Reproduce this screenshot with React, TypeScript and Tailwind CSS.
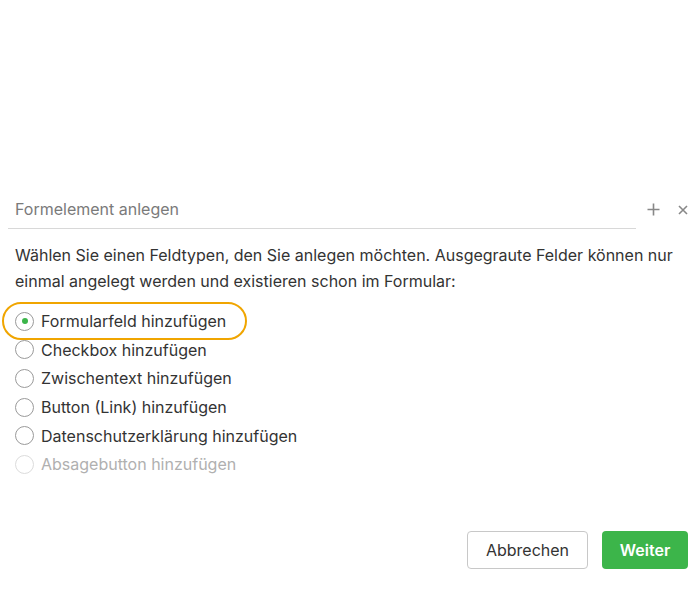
import React from 'react'

const options = [
  { label: 'Formularfeld hinzufügen', checked: true },
  { label: 'Checkbox hinzufügen' },
  { label: 'Zwischentext hinzufügen' },
  { label: 'Button (Link) hinzufügen' },
  { label: 'Datenschutzerklärung hinzufügen' },
  { label: 'Absagebutton hinzufügen', disabled: true },
]

function Radio({ checked, disabled }: { checked?: boolean; disabled?: boolean }) {
  return (
    <span
      className={`flex h-[19px] w-[19px] shrink-0 items-center justify-center rounded-full border bg-white ${
        disabled ? 'border-[#dcdcdc]' : 'border-[#9a9a9a]'
      }`}
    >
      {checked && <span className="h-[6px] w-[6px] rounded-full bg-[#3cb54a]" />}
    </span>
  )
}

export default function App() {
  return (
    <div className="h-[612px] w-[700px] bg-white font-['Inter',sans-serif] text-[16px] text-[#333]">
      <div className="flex items-center pt-[197px]">
        <div className="ml-[8px] w-[628px] border-b border-[#d8d8d8] pb-[7px] pl-[7px] text-[#7a7a7a]">
          Formelement anlegen
        </div>
        <div className="mb-[7px] ml-[11px] flex items-center gap-[18px] text-[#888]">
          <svg width="13" height="13" viewBox="0 0 13 13" fill="none" stroke="currentColor" strokeWidth="1.6">
            <path d="M6.5 0.5v12M0.5 6.5h12" />
          </svg>
          <svg width="10" height="10" viewBox="0 0 10 10" fill="none" stroke="currentColor" strokeWidth="1.6">
            <path d="M1 1l8 8M9 1l-8 8" />
          </svg>
        </div>
      </div>

      <p className="mt-[13px] px-[15px] leading-[26px]">
        Wählen Sie einen Feldtypen, den Sie anlegen möchten. Ausgegraute Felder können nur einmal angelegt
        werden und existieren schon im Formular:
      </p>

      <div className="mt-[13px] flex flex-col pl-[15px]">
        {options.map((o) => (
          <label
            key={o.label}
            className={`relative flex h-[28.6px] items-center gap-[7px] ${o.disabled ? 'text-[#b0b0b0]' : ''}`}
          >
            {o.checked && (
              <span className="absolute left-[-13px] top-[-5px] h-[38px] w-[245px] rounded-[19px] border-[2.5px] border-[#f0a500]" />
            )}
            <Radio checked={o.checked} disabled={o.disabled} />
            <span>{o.label}</span>
          </label>
        ))}
      </div>

      <div className="mt-[52px] flex justify-end gap-[14px] pr-[12px]">
        <button className="h-[38px] w-[121px] rounded-[4px] border border-[#c8c8c8] bg-white text-[#333]">
          Abbrechen
        </button>
        <button className="h-[38px] w-[86px] rounded-[4px] bg-[#3cb54a] font-semibold text-white">Weiter</button>
      </div>
    </div>
  )
}
